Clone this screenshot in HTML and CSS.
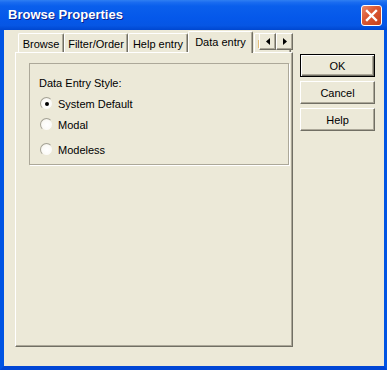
FILE: index.html
```html
<!DOCTYPE html>
<html lang="en">
<head>
  <meta charset="UTF-8" />
  <title>Browse Properties</title>
  <link rel="stylesheet" href="styles.css">
</head>
<body>
  <div class="window">
    <div class="titlebar">
      <span class="title">Browse Properties</span>
      <button class="close-btn" aria-label="Close">
        <svg width="13" height="13" viewBox="0 0 13 13">
          <path d="M2 2 L11 11 M11 2 L2 11" stroke="#fff" stroke-width="2.4" stroke-linecap="square" fill="none"/>
        </svg>
      </button>
    </div>
    <div class="frame">
      <div class="client">
        <div class="tabctl">
          <div class="tabstrip">
            <div class="tab tab-browse">Browse</div>
            <div class="tab tab-filter">Filter/Order</div>
            <div class="tab tab-help">Help entry</div>
            <div class="tab tab-data selected">Data entry</div>
            <div class="tab tab-more">Help</div>
          </div>
          <div class="tab-scroll">
            <button class="scroll-btn">
              <svg width="4" height="7" viewBox="0 0 4 7"><path d="M4 0 L0 3.5 L4 7 Z" fill="#000"/></svg>
            </button>
            <button class="scroll-btn">
              <svg width="4" height="7" viewBox="0 0 4 7"><path d="M0 0 L4 3.5 L0 7 Z" fill="#000"/></svg>
            </button>
          </div>
          <div class="panel">
            <div class="groupbox">
              <div class="group-label">Data Entry Style:</div>
              <div class="radio-row first"><span class="radio checked"></span>System Default</div>
              <div class="radio-row"><span class="radio"></span>Modal</div>
              <div class="radio-row last"><span class="radio"></span>Modeless</div>
            </div>
          </div>
        </div>
        <div class="actions">
          <button class="btn btn-default">OK</button>
          <button class="btn">Cancel</button>
          <button class="btn">Help</button>
        </div>
      </div>
    </div>
  </div>
</body>
</html>
```

FILE: styles.css
```css
* {
  box-sizing: border-box;
}
body {
  margin: 0;
  background: #0054e3;
  font-family: 'Liberation Sans', Arial, sans-serif;
  font-size: 11px;
  color: #000;
}
.window {
  width: 387px;
  height: 370px;
  display: flex;
  flex-direction: column;
  background: #0054e3;
}
.titlebar {
  height: 30px;
  display: flex;
  align-items: center;
  padding-left: 8px;
  background: linear-gradient(to bottom, #2f7ff2 0%, #1a6cf0 8%, #0a5fec 20%, #0558ea 60%, #0656e4 85%, #0047d0 100%);
}
.title {
  flex: 1;
  color: #fff;
  font-weight: bold;
  font-size: 13px;
  text-shadow: 1px 1px 0 #0a1f8a;
  margin-top: -1px;
}
.close-btn {
  align-self: flex-start;
  margin-top: 5px;
  margin-right: 5px;
  width: 21px;
  height: 21px;
  padding: 0;
  border: 1px solid #fff;
  border-radius: 3px;
  background: linear-gradient(135deg, #e98a6c 0%, #dd5a34 40%, #c6401c 100%);
  display: flex;
  align-items: center;
  justify-content: center;
}
.frame {
  flex: 1;
  display: flex;
  border-left: 4px solid #0054e3;
  border-right: 3px solid #0054e3;
  border-bottom: 4px solid #0046d5;
}
.client {
  flex: 1;
  display: flex;
  background: #ece9d8;
  padding: 1px 0 0 11px;
}
.tabctl {
  position: relative;
  width: 278px;
}
.tabstrip {
  height: 21px;
  display: flex;
  align-items: flex-end;
  padding-left: 3px;
}
.tab {
  position: relative;
  height: 19px;
  padding-top: 4px;
  line-height: 13px;
  text-align: center;
  white-space: nowrap;
  overflow: hidden;
  background: #ece9d8;
  border-top: 1px solid #fff;
  border-left: 1px solid #fff;
  border-right: 1px solid #716f64;
  border-radius: 2px 2px 0 0;
  box-shadow: inset -1px 0 0 #aca899;
}
.tab-browse { width: 46px; }
.tab-filter { width: 64px; }
.tab-help { width: 60px; }
.tab-data { width: 65px; }
.tab-more {
  width: 37px;
  margin-left: 1px;
  text-align: left;
  padding-left: 3px;
}
.tab.selected {
  height: 22px;
  margin-bottom: -1px;
  z-index: 2;
}
.tab-scroll {
  position: absolute;
  top: 2px;
  right: 0;
  display: flex;
  z-index: 3;
}
.scroll-btn {
  width: 17px;
  height: 17px;
  padding: 0;
  background: #ece9d8;
  border: 1px solid;
  border-color: #fff #716f64 #716f64 #fff;
  box-shadow: inset -1px -1px 0 #aca899;
  display: flex;
  align-items: center;
  justify-content: center;
}
.panel {
  position: relative;
  z-index: 1;
  height: 295px;
  border-top: 1px solid #fff;
  border-left: 1px solid #fff;
  border-right: 1px solid #716f64;
  border-bottom: 1px solid #716f64;
  box-shadow: inset -1px -1px 0 #aca899;
  padding: 10px 0 0 13px;
}
.groupbox {
  width: 260px;
  height: 102px;
  border: 1px solid #aca899;
  box-shadow: 1px 1px 0 #fff;
  padding: 13px 0 0 9px;
}
.group-label {
  line-height: 13px;
}
.radio-row {
  height: 21px;
  display: flex;
  align-items: center;
}
.radio-row.first {
  margin-top: 3px;
}
.radio-row.last {
  margin-top: 4px;
}
.radio {
  width: 13px;
  height: 13px;
  margin-left: 1px;
  margin-right: 5px;
  border-radius: 50%;
  border: 1px solid;
  border-color: #a4a295 #ece9d8 #ece9d8 #a4a295;
  background: radial-gradient(circle at 55% 55%, #ffffff 0%, #fbfaf6 55%, #e6e3d6 100%);
  display: flex;
  align-items: center;
  justify-content: center;
}
.radio.checked::after {
  content: '';
  width: 4px;
  height: 4px;
  border-radius: 50%;
  background: #000;
}
.actions {
  margin-left: 7px;
  margin-top: 23px;
  display: flex;
  flex-direction: column;
  gap: 4px;
}
.btn {
  width: 75px;
  height: 23px;
  padding: 0;
  font-family: 'Liberation Sans', Arial, sans-serif;
  font-size: 11px;
  color: #000;
  background: #ece9d8;
  border: 1px solid;
  border-color: #fff #716f64 #716f64 #fff;
  box-shadow: inset -1px -1px 0 #aca899;
}
.btn-default {
  border: 1px solid #000;
  box-shadow: inset 1px 1px 0 #fff, inset -1px -1px 0 #716f64, inset -2px -2px 0 #aca899;
}
```
